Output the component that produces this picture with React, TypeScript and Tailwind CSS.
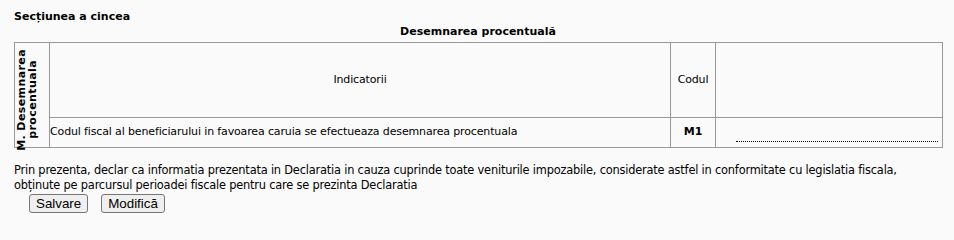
export default function App() {
  return (
    <div className="min-h-screen w-full bg-[#fafafa] pt-[9px] font-['DejaVu_Sans',Verdana,sans-serif] text-[11px] text-black">
      <div className="mx-[14px] w-[928px]">
        {/* headings */}
        <div className="font-bold leading-[15px]">Secțiunea a cincea</div>
        <div className="text-center font-bold leading-[15px]">Desemnarea procentuală</div>

        {/* table */}
        <table className="mt-[3px] w-[928px] table-fixed border-collapse tracking-[-0.14px]">
          <colgroup>
            <col className="w-[35px]" />
            <col className="w-[621px]" />
            <col className="w-[45px]" />
            <col className="w-[227px]" />
          </colgroup>
          <tbody>
            <tr className="h-[75px]">
              <td rowSpan={2} className="border border-[#999999] p-0 align-middle">
                <div className="ml-[1px] w-[22px] translate-y-[5px] rotate-180 text-center text-[11px] font-bold leading-[11px] tracking-[0.4px] [writing-mode:vertical-rl]">
                  M. Desemnarea
                  <br />
                  procentuala
                </div>
              </td>
              <td className="border border-[#999999] p-0 text-center align-middle">Indicatorii</td>
              <td className="border border-[#999999] p-0 text-center align-middle">Codul</td>
              <td className="border border-[#999999] p-0" />
            </tr>
            <tr className="h-[30px]">
              <td className="border border-[#999999] p-0 align-middle">
                Codul fiscal al beneficiarului in favoarea caruia se efectueaza desemnarea procentuala
              </td>
              <td className="border border-[#999999] p-0 text-center align-middle font-bold">M1</td>
              <td className="border border-[#999999] p-0 align-middle">
                <input
                  type="text"
                  className="ml-[20px] mt-[2px] block h-[16px] w-[202px] border-0 border-b border-dotted border-black bg-transparent p-0 text-[11px] outline-none"
                />
              </td>
            </tr>
          </tbody>
        </table>

        {/* declaration */}
        <p className="mt-[15px] text-[11.4px] leading-[15px] tracking-[-0.2px]">
          Prin prezenta, declar ca informatia prezentata in Declaratia in cauza cuprinde toate veniturile impozabile,
          considerate astfel in conformitate cu legislatia fiscala, obținute pe parcursul perioadei fiscale pentru care
          se prezinta Declaratia
        </p>

        <div className="mt-[1px] ml-[15px] flex gap-[13px] font-['Liberation_Sans',Arial,sans-serif] text-[13.33px]">
          <button className="rounded-[3px] border border-[#767676] bg-[#efefef] px-[6px] py-0 leading-[17px]">
            Salvare
          </button>
          <button className="rounded-[3px] border border-[#767676] bg-[#efefef] px-[6px] py-0 leading-[17px]">
            Modifică
          </button>
        </div>
      </div>
    </div>
  );
}
